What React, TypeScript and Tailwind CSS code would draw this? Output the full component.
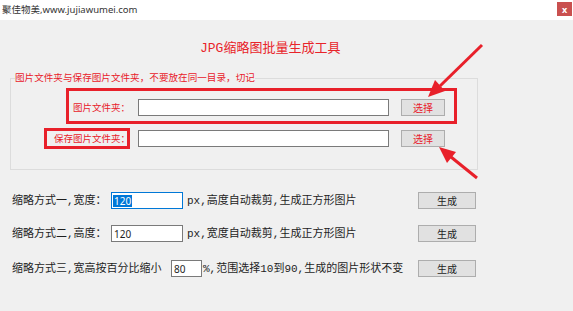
import React from "react";

const sans = { fontFamily: '"Noto Sans", "Noto Sans CJK SC", sans-serif' };
const simsun = { fontFamily: '"Liberation Mono", "Noto Sans CJK SC", monospace' };

function WinButton({ label, red, className = "" }: { label: string; red?: boolean; className?: string }) {
  return (
    <button
      type="button"
      className={`flex h-[17px] items-center justify-center border border-[#adadad] bg-[#e1e1e1] text-[10px] leading-none ${
        red ? "text-[#e8202a]" : "text-[#1e1e1e]"
      } ${className}`}
      style={sans}
    >
      {label}
    </button>
  );
}

function Arrows() {
  return (
    <svg className="pointer-events-none absolute left-0 top-0" width="573" height="311">
      <line x1="482" y1="45" x2="440" y2="86" stroke="#e8202a" strokeWidth="3" />
      <polygon points="428,97 445,91 435,80" fill="#e8202a" />
      <line x1="477" y1="178" x2="451" y2="157" stroke="#e8202a" strokeWidth="3" />
      <polygon points="439,147 456,152 447,163" fill="#e8202a" />
    </svg>
  );
}

export default function App() {
  return (
    <div className="relative h-[311px] w-[573px] overflow-hidden bg-[#f0f0f0]" style={simsun}>
      {/* TITLE BAR */}
      <div className="flex h-[20px] items-start justify-between bg-white pl-[2px] pr-[1px]">
        <span className="mt-[3px] text-[9.5px] leading-[14px] text-[#333]" style={sans}>
          聚佳物美,www.jujiawumei.com
        </span>
        <span
          className="mt-[2px] flex h-[14px] w-[15px] items-center justify-center bg-[#c9504f] text-[9px] font-bold leading-none text-white"
          style={sans}
        >
          x
        </span>
      </div>

      {/* HEADING */}
      <div className="mt-[20px] pl-[200px] text-[13px] leading-[18px] text-[#e8242a]">JPG缩略图批量生成工具</div>

      {/* FOLDERS GROUP */}
      <fieldset className="ml-[10px] mt-[13px] w-[468px] border border-[#dcdcdc] pb-[20px]">
        <legend className="ml-[4px] text-[9.6px] leading-[14px] text-[#e8202a]" style={sans}>
          图片文件夹与保存图片文件夹，不要放在同一目录，切记
        </legend>

        <div className="ml-[55px] mt-[3px] flex h-[36px] w-[391px] items-center border-[3px] border-[#e8202a] pt-[3px]">
          <span className="whitespace-nowrap pl-[4px] text-[9.5px] leading-[14px] text-[#e8202a]" style={sans}>
            图片文件夹：
          </span>
          <input className="ml-[8px] h-[17px] w-[251px] border border-[#7a7a7a] bg-white" />
          <WinButton label="选择" red className="ml-[12px] w-[44px]" />
        </div>

        <div className="ml-[33px] mt-[4px] flex items-center">
          <div className="flex h-[21px] w-[86px] items-center border-[3px] border-[#e8202a] pl-[7px]">
            <span className="whitespace-nowrap text-[9.5px] leading-[14px] text-[#e8202a]" style={sans}>
              保存图片文件夹：
            </span>
          </div>
          <input className="ml-[8px] h-[17px] w-[251px] border border-[#7a7a7a] bg-white" />
          <WinButton label="选择" red className="ml-[12px] w-[44px]" />
        </div>
      </fieldset>

      {/* MODES */}
      <div className="flex flex-col pl-[12px] text-[11px] leading-[14px] text-[#1e1e1e]">
        <div className="mt-[22px] flex items-center">
          <div className="flex w-[406px] items-center">
            <span className="w-[99px] whitespace-nowrap">缩略方式一,宽度：</span>
            <div className="flex h-[17px] w-[72px] items-center border border-[#0078d7] bg-white pl-[1px]">
              <span className="bg-[#0078d7] px-[1px] text-[10px] leading-[12px] text-white" style={sans}>
                120
              </span>
            </div>
            <span className="ml-[4px] whitespace-nowrap">px,高度自动裁剪,生成正方形图片</span>
          </div>
          <WinButton label="生成" className="w-[58px]" />
        </div>

        <div className="mt-[16px] flex items-center">
          <div className="flex w-[406px] items-center">
            <span className="w-[99px] whitespace-nowrap">缩略方式二,高度：</span>
            <div className="flex h-[17px] w-[72px] items-center border border-[#7a7a7a] bg-white pl-[2px]">
              <span className="text-[10px] leading-[12px]" style={sans}>
                120
              </span>
            </div>
            <span className="ml-[4px] whitespace-nowrap">px,宽度自动裁剪,生成正方形图片</span>
          </div>
          <WinButton label="生成" className="w-[58px]" />
        </div>

        <div className="mt-[18px] flex items-center">
          <div className="flex w-[406px] items-center">
            <span className="w-[159px] whitespace-nowrap">缩略方式三,宽高按百分比缩小</span>
            <div className="flex h-[17px] w-[31px] items-center border border-[#7a7a7a] bg-white pl-[2px]">
              <span className="text-[10px] leading-[12px]" style={sans}>
                80
              </span>
            </div>
            <span className="ml-[1px] whitespace-nowrap">%,范围选择10到90,生成的图片形状不变</span>
          </div>
          <WinButton label="生成" className="w-[58px]" />
        </div>
      </div>

      <Arrows />
    </div>
  );
}
